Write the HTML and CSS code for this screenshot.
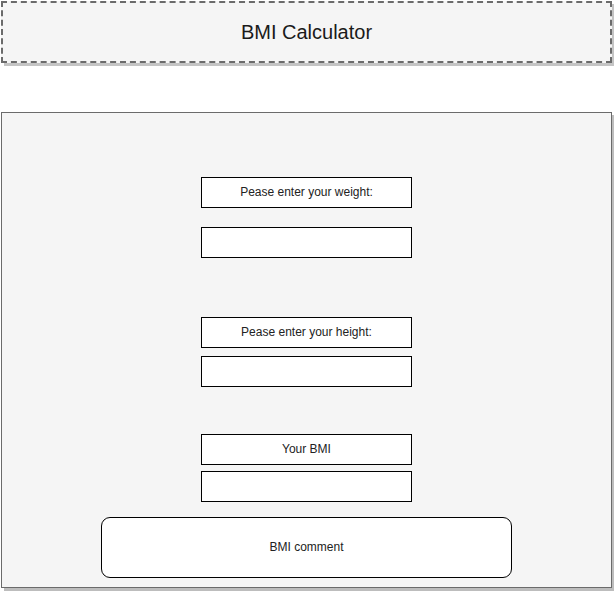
FILE: index.html
```html
<!DOCTYPE html>
<html>
<head>
<meta charset="utf-8">
<link rel="stylesheet" href="styles.css">
</head>
<body>
<div class="page">
  <header class="title-bar">BMI Calculator</header>
  <main class="panel">
    <div class="box label-box gap-a">Pease enter your weight:</div>
    <div class="box input-box gap-b"></div>
    <div class="box label-box gap-c">Pease enter your height:</div>
    <div class="box input-box gap-d"></div>
    <div class="box label-box gap-e">Your BMI</div>
    <div class="box input-box gap-f"></div>
    <div class="comment">BMI comment</div>
  </main>
</div>
</body>
</html>
```

FILE: styles.css
```css
html, body {
  margin: 0;
  padding: 0;
  background: #ffffff;
}
.page {
  width: 614px;
  height: 591px;
  display: flex;
  flex-direction: column;
  align-items: flex-start;
  font-family: "Liberation Sans", Arial, sans-serif;
}
.title-bar {
  box-sizing: border-box;
  margin: 1px 0 0 1px;
  width: 611px;
  height: 62px;
  border: 2px dashed #6b6b6b;
  background: #f5f5f5;
  box-shadow: 3px 3px 0 #c4c4c4;
  display: flex;
  align-items: center;
  justify-content: center;
  font-size: 20px;
  color: #1a1a1a;
}
.panel {
  box-sizing: border-box;
  margin: 49px 0 0 1px;
  width: 611px;
  height: 476px;
  border: 1px solid #6b6b6b;
  background: #f5f5f5;
  box-shadow: 3px 3px 0 #bdbdbd;
  display: flex;
  flex-direction: column;
  align-items: center;
  padding-top: 64px;
}
.box {
  box-sizing: border-box;
  width: 211px;
  height: 31px;
  border: 1px solid #000;
  background: #ffffff;
  flex: none;
}
.label-box {
  display: flex;
  align-items: center;
  justify-content: center;
  font-size: 12px;
  color: #222;
  padding-bottom: 2px;
}
.gap-a { margin-bottom: 19px; }
.gap-b { margin-bottom: 59px; }
.gap-c { margin-bottom: 8px; }
.gap-d { margin-bottom: 47px; }
.gap-e { margin-bottom: 6px; }
.gap-f { margin-bottom: 15px; }
.comment {
  box-sizing: border-box;
  width: 411px;
  height: 61px;
  border: 1px solid #000;
  border-radius: 9px;
  background: #ffffff;
  display: flex;
  align-items: center;
  justify-content: center;
  font-size: 12px;
  color: #222;
  flex: none;
  padding-bottom: 2px;
}
```
